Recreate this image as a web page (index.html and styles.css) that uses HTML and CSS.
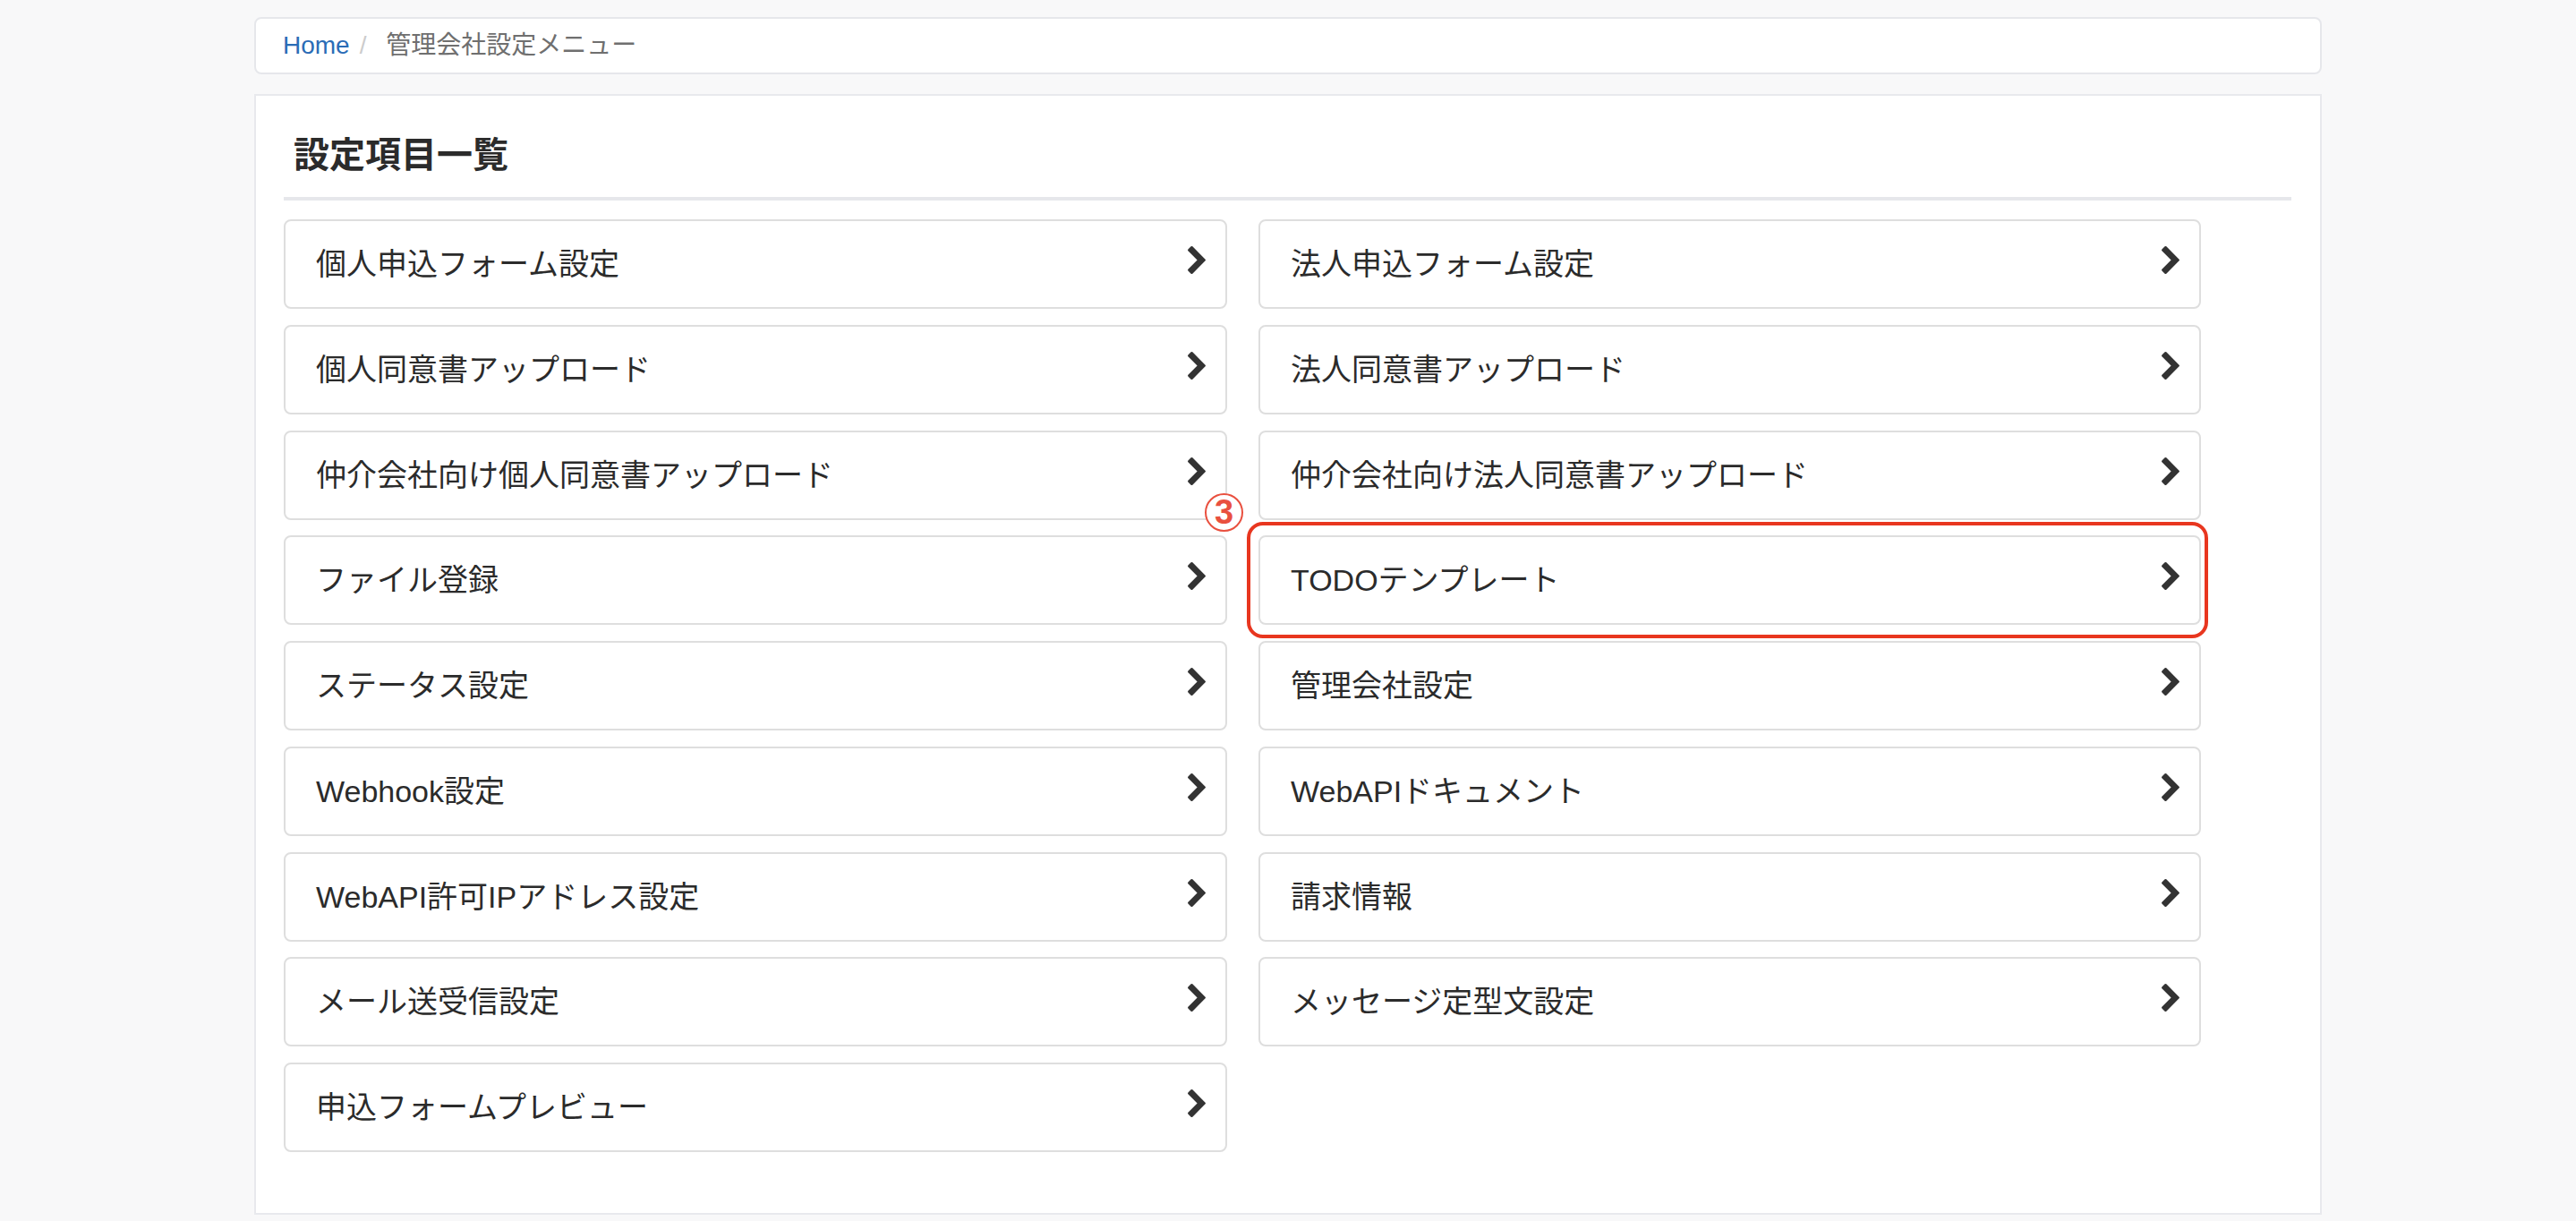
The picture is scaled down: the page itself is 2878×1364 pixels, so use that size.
FILE: index.html
```html
<!DOCTYPE html>
<html lang="ja">
<head>
<meta charset="utf-8">
<title>管理会社設定メニュー</title>
<link rel="stylesheet" href="styles.css">
</head>
<body>
<div class="container">
  <ol class="breadcrumb">
    <li><a href="#">Home</a></li>
    <li class="active">管理会社設定メニュー</li>
  </ol>

  <div class="panel">
    <h3 class="panel-title">設定項目一覧</h3>
    <div class="menu-grid">
      <a class="menu-card" href="#"><span class="label">個人申込フォーム設定</span><svg class="chev" viewBox="90 26 1036 1612"><path d="M1107 877l-742 742q-19 19-45 19t-45-19l-166-166q-19-19-19-45t19-45l531-531-531-531q-19-19-19-45t19-45l166-166q19-19 45-19t45 19l742 742q19 19 19 45t-19 45z"/></svg></a>
      <a class="menu-card" href="#"><span class="label">法人申込フォーム設定</span><svg class="chev" viewBox="90 26 1036 1612"><path d="M1107 877l-742 742q-19 19-45 19t-45-19l-166-166q-19-19-19-45t19-45l531-531-531-531q-19-19-19-45t19-45l166-166q19-19 45-19t45 19l742 742q19 19 19 45t-19 45z"/></svg></a>
      <a class="menu-card" href="#"><span class="label">個人同意書アップロード</span><svg class="chev" viewBox="90 26 1036 1612"><path d="M1107 877l-742 742q-19 19-45 19t-45-19l-166-166q-19-19-19-45t19-45l531-531-531-531q-19-19-19-45t19-45l166-166q19-19 45-19t45 19l742 742q19 19 19 45t-19 45z"/></svg></a>
      <a class="menu-card" href="#"><span class="label">法人同意書アップロード</span><svg class="chev" viewBox="90 26 1036 1612"><path d="M1107 877l-742 742q-19 19-45 19t-45-19l-166-166q-19-19-19-45t19-45l531-531-531-531q-19-19-19-45t19-45l166-166q19-19 45-19t45 19l742 742q19 19 19 45t-19 45z"/></svg></a>
      <a class="menu-card" href="#"><span class="label">仲介会社向け個人同意書アップロード</span><svg class="chev" viewBox="90 26 1036 1612"><path d="M1107 877l-742 742q-19 19-45 19t-45-19l-166-166q-19-19-19-45t19-45l531-531-531-531q-19-19-19-45t19-45l166-166q19-19 45-19t45 19l742 742q19 19 19 45t-19 45z"/></svg></a>
      <a class="menu-card" href="#"><span class="label">仲介会社向け法人同意書アップロード</span><svg class="chev" viewBox="90 26 1036 1612"><path d="M1107 877l-742 742q-19 19-45 19t-45-19l-166-166q-19-19-19-45t19-45l531-531-531-531q-19-19-19-45t19-45l166-166q19-19 45-19t45 19l742 742q19 19 19 45t-19 45z"/></svg></a>
      <a class="menu-card" href="#"><span class="label">ファイル登録</span><svg class="chev" viewBox="90 26 1036 1612"><path d="M1107 877l-742 742q-19 19-45 19t-45-19l-166-166q-19-19-19-45t19-45l531-531-531-531q-19-19-19-45t19-45l166-166q19-19 45-19t45 19l742 742q19 19 19 45t-19 45z"/></svg></a>
      <a class="menu-card highlighted" href="#"><span class="label">TODOテンプレート</span><svg class="chev" viewBox="90 26 1036 1612"><path d="M1107 877l-742 742q-19 19-45 19t-45-19l-166-166q-19-19-19-45t19-45l531-531-531-531q-19-19-19-45t19-45l166-166q19-19 45-19t45 19l742 742q19 19 19 45t-19 45z"/></svg><span class="hl-box"></span><span class="hl-num">3</span></a>
      <a class="menu-card" href="#"><span class="label">ステータス設定</span><svg class="chev" viewBox="90 26 1036 1612"><path d="M1107 877l-742 742q-19 19-45 19t-45-19l-166-166q-19-19-19-45t19-45l531-531-531-531q-19-19-19-45t19-45l166-166q19-19 45-19t45 19l742 742q19 19 19 45t-19 45z"/></svg></a>
      <a class="menu-card" href="#"><span class="label">管理会社設定</span><svg class="chev" viewBox="90 26 1036 1612"><path d="M1107 877l-742 742q-19 19-45 19t-45-19l-166-166q-19-19-19-45t19-45l531-531-531-531q-19-19-19-45t19-45l166-166q19-19 45-19t45 19l742 742q19 19 19 45t-19 45z"/></svg></a>
      <a class="menu-card" href="#"><span class="label">Webhook設定</span><svg class="chev" viewBox="90 26 1036 1612"><path d="M1107 877l-742 742q-19 19-45 19t-45-19l-166-166q-19-19-19-45t19-45l531-531-531-531q-19-19-19-45t19-45l166-166q19-19 45-19t45 19l742 742q19 19 19 45t-19 45z"/></svg></a>
      <a class="menu-card" href="#"><span class="label">WebAPIドキュメント</span><svg class="chev" viewBox="90 26 1036 1612"><path d="M1107 877l-742 742q-19 19-45 19t-45-19l-166-166q-19-19-19-45t19-45l531-531-531-531q-19-19-19-45t19-45l166-166q19-19 45-19t45 19l742 742q19 19 19 45t-19 45z"/></svg></a>
      <a class="menu-card" href="#"><span class="label">WebAPI許可IPアドレス設定</span><svg class="chev" viewBox="90 26 1036 1612"><path d="M1107 877l-742 742q-19 19-45 19t-45-19l-166-166q-19-19-19-45t19-45l531-531-531-531q-19-19-19-45t19-45l166-166q19-19 45-19t45 19l742 742q19 19 19 45t-19 45z"/></svg></a>
      <a class="menu-card" href="#"><span class="label">請求情報</span><svg class="chev" viewBox="90 26 1036 1612"><path d="M1107 877l-742 742q-19 19-45 19t-45-19l-166-166q-19-19-19-45t19-45l531-531-531-531q-19-19-19-45t19-45l166-166q19-19 45-19t45 19l742 742q19 19 19 45t-19 45z"/></svg></a>
      <a class="menu-card" href="#"><span class="label">メール送受信設定</span><svg class="chev" viewBox="90 26 1036 1612"><path d="M1107 877l-742 742q-19 19-45 19t-45-19l-166-166q-19-19-19-45t19-45l531-531-531-531q-19-19-19-45t19-45l166-166q19-19 45-19t45 19l742 742q19 19 19 45t-19 45z"/></svg></a>
      <a class="menu-card" href="#"><span class="label">メッセージ定型文設定</span><svg class="chev" viewBox="90 26 1036 1612"><path d="M1107 877l-742 742q-19 19-45 19t-45-19l-166-166q-19-19-19-45t19-45l531-531-531-531q-19-19-19-45t19-45l166-166q19-19 45-19t45 19l742 742q19 19 19 45t-19 45z"/></svg></a>
      <a class="menu-card" href="#"><span class="label">申込フォームプレビュー</span><svg class="chev" viewBox="90 26 1036 1612"><path d="M1107 877l-742 742q-19 19-45 19t-45-19l-166-166q-19-19-19-45t19-45l531-531-531-531q-19-19-19-45t19-45l166-166q19-19 45-19t45 19l742 742q19 19 19 45t-19 45z"/></svg></a>
    </div>
  </div>
</div>
</body>
</html>
```
FILE: styles.css
```css
* { box-sizing: border-box; }

html, body {
  margin: 0;
  padding: 0;
  background: #f8f8f9;
}

body {
  font-family: "Liberation Sans", "Noto Sans CJK JP", sans-serif;
  color: #333333;
}

.container {
  width: 2310px;
  margin: 0 auto;
  padding-top: 19px;
}

/* Breadcrumb */
.breadcrumb {
  display: flex;
  align-items: center;
  list-style: none;
  margin: 0 0 22px 0;
  padding: 0 30px;
  height: 64px;
  background: #ffffff;
  border: 2px solid #e6e7eb;
  border-radius: 8px;
  font-size: 28px;
  line-height: 40px;
}

.breadcrumb li {
  display: inline-block;
}

.breadcrumb a {
  color: #2a6cb6;
  text-decoration: none;
}

.breadcrumb li + li::before {
  content: "/\00a0";
  padding: 0 14px 0 11px;
  color: #cccccc;
}

.breadcrumb .active {
  color: #6f6f6f;
}

/* Panel */
.panel {
  background: #ffffff;
  border: 2px solid #e8e9ed;
  padding: 35px 32px 68px 31px;
}

.panel-title {
  margin: 0;
  padding: 0 0 22px 11px;
  font-family: "Noto Sans CJK JP", sans-serif;
  font-size: 40px;
  font-weight: 700;
  line-height: 56px;
  color: #2b2b2b;
  border-bottom: 4px solid #e6e7eb;
}

.menu-grid {
  display: grid;
  grid-template-columns: 1054px 1053px;
  column-gap: 35px;
  row-gap: 17.75px;
  margin-top: 21px;
}

.menu-card {
  position: relative;
  display: flex;
  align-items: center;
  justify-content: space-between;
  height: 100px;
  padding: 0 22px 0 34px;
  background: #ffffff;
  border: 2px solid #dedede;
  border-radius: 8px;
  color: #2b2b2b;
  text-decoration: none;
  font-size: 34px;
  line-height: 40px;
}

.menu-card .label {
  white-space: nowrap;
}

.chev {
  width: 20px;
  height: 31px;
  margin-bottom: 9px;
  fill: #333333;
  flex: none;
}

/* Annotation overlay */
.hl-box {
  position: absolute;
  top: -17px;
  bottom: -17px;
  left: -15px;
  right: -10px;
  border: 4px solid #e8361f;
  border-radius: 18px;
  pointer-events: none;
}

.hl-num {
  position: absolute;
  left: -62px;
  top: -49px;
  width: 43px;
  height: 43px;
  border: 2px solid #e9503f;
  border-radius: 50%;
  background: #ffffff;
  color: #e9503f;
  font-family: "Liberation Sans", sans-serif;
  font-weight: 700;
  font-size: 38px;
  line-height: 39px;
  text-align: center;
}
```
